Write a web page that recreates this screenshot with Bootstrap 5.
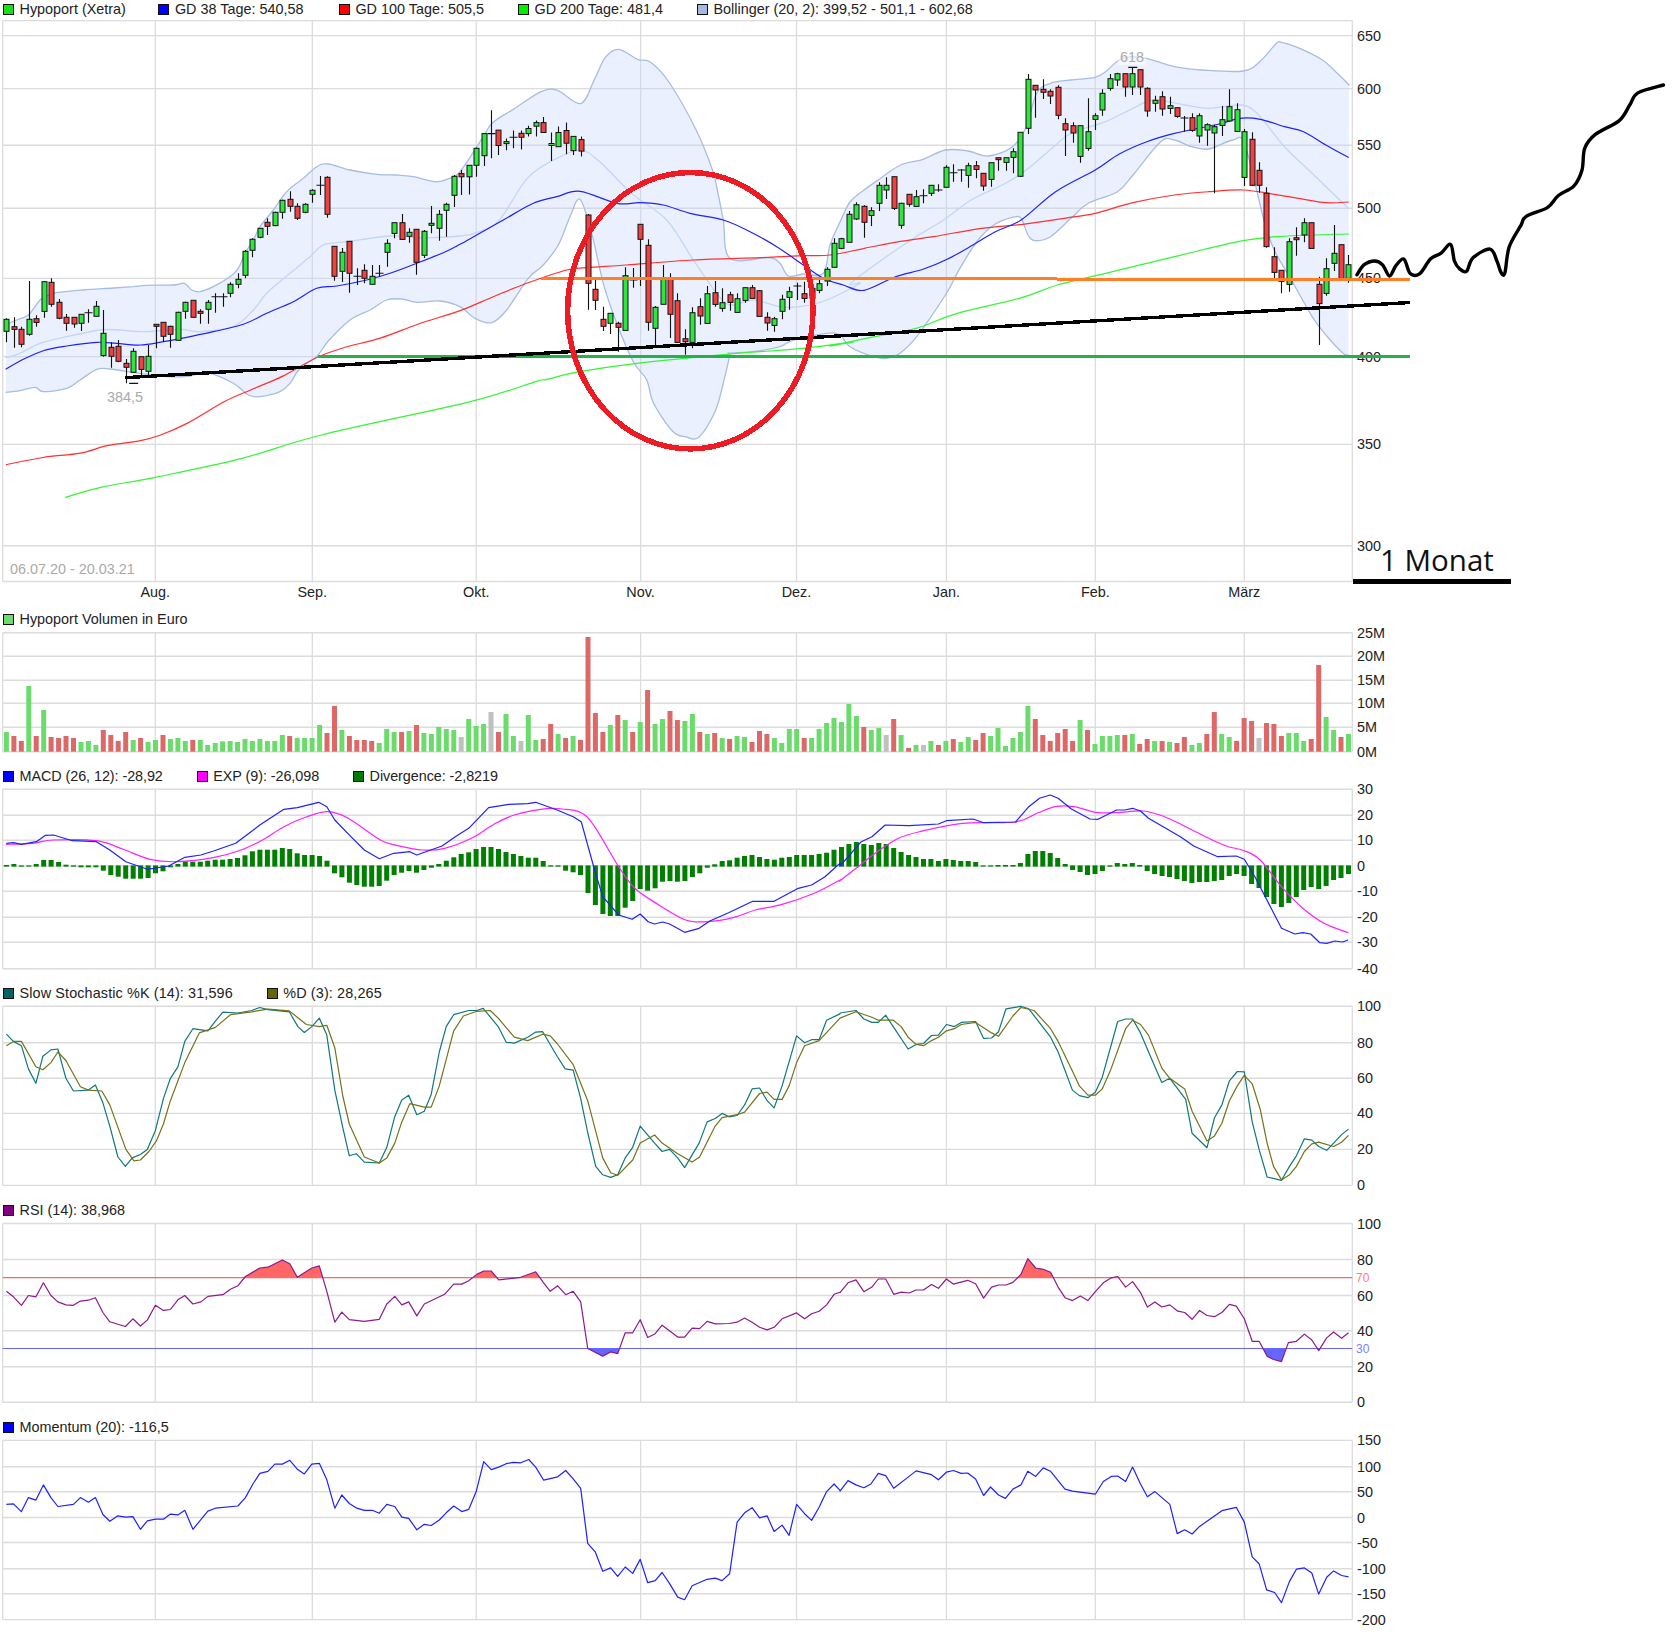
<!DOCTYPE html>
<html lang="de">
<head>
<meta charset="utf-8">
<title>Hypoport Chart</title>
<link href="https://cdn.jsdelivr.net/npm/bootstrap@5.3.0/dist/css/bootstrap.min.css" rel="stylesheet">
<style>
html,body{background:#fff;margin:0;overflow:hidden}
body{font-family:"Liberation Sans",Arial,sans-serif;color:#222;width:1674px;height:1644px}
.legend-row{padding-left:3px;gap:34px;font-size:14.4px;line-height:1;white-space:nowrap;color:#222}
.legend-first{height:18px}
.legend-vol{height:18px}
.legend-next{height:20px}
.legend-item{gap:5.5px}
.legend-tight{letter-spacing:-.07px}
.legend-wide{letter-spacing:.12px}
.item-narrow{margin-right:-1.5px}
.item-loose{margin-right:1.5px}
.swatch{display:block;width:11px;height:11px;border:1px solid #111}
.sw-lime{background:#16e016}.sw-blue{background:#0000ff}.sw-red{background:#ff0000}.sw-green{background:#00f000}
.sw-boll{background:#a3b8e3}.sw-vol{background:#6bdc6b}.sw-pink{background:#ff00ff}.sw-div{background:#007a00}
.sw-teal{background:#006464}.sw-olive{background:#666600}.sw-purple{background:#800080}
svg.plot{display:block;width:1674px;overflow:visible}
svg.plot text{font-family:"Liberation Sans",Arial,sans-serif;font-size:14.4px;fill:#222}
svg.plot text.tiny{font-size:12px}
svg.plot text.tiny-red{fill:#ff8080}
svg.plot text.tiny-blue{fill:#8080ff}
svg.plot text.muted-grey{fill:#aaa}
svg.plot text.scribble-label{font-family:"Open Sans","Noto Sans",sans-serif;font-size:29.5px;fill:#111}
</style>
</head>
<body>
<main class="d-flex flex-column">
<section>
 <div class="d-flex align-items-center legend-row legend-first">
  <span class="d-flex align-items-center legend-item item-narrow"><i class="swatch sw-lime"></i>Hypoport (Xetra)</span>
  <span class="d-flex align-items-center legend-item item-loose"><i class="swatch sw-blue"></i>GD 38 Tage: 540,58</span>
  <span class="d-flex align-items-center legend-item"><i class="swatch sw-red"></i>GD 100 Tage: 505,5</span>
  <span class="d-flex align-items-center legend-item"><i class="swatch sw-green"></i>GD 200 Tage: 481,4</span>
  <span class="d-flex align-items-center legend-item"><i class="swatch sw-boll"></i>Bollinger (20, 2): 399,52 - 501,1 - 602,68</span>
 </div>
 <svg class="plot" id="p1" height="592" viewBox="0 18 1674 592"></svg>
</section>
<section>
 <div class="d-flex align-items-center legend-row legend-vol">
  <span class="d-flex align-items-center legend-item"><i class="swatch sw-vol"></i>Hypoport Volumen in Euro</span>
 </div>
 <svg class="plot" id="p2" height="138" viewBox="0 628 1674 138"></svg>
</section>
<section>
 <div class="d-flex align-items-center legend-row legend-next legend-tight">
  <span class="d-flex align-items-center legend-item"><i class="swatch sw-blue"></i>MACD (26, 12): -28,92</span>
  <span class="d-flex align-items-center legend-item"><i class="swatch sw-pink"></i>EXP (9): -26,098</span>
  <span class="d-flex align-items-center legend-item"><i class="swatch sw-div"></i>Divergence: -2,8219</span>
 </div>
 <svg class="plot" id="p3" height="197" viewBox="0 786 1674 197"></svg>
</section>
<section>
 <div class="d-flex align-items-center legend-row legend-next legend-wide">
  <span class="d-flex align-items-center legend-item"><i class="swatch sw-teal"></i>Slow Stochastic %K (14): 31,596</span>
  <span class="d-flex align-items-center legend-item"><i class="swatch sw-olive"></i>%D (3): 28,265</span>
 </div>
 <svg class="plot" id="p4" height="197" viewBox="0 1003 1674 197"></svg>
</section>
<section>
 <div class="d-flex align-items-center legend-row legend-next">
  <span class="d-flex align-items-center legend-item"><i class="swatch sw-purple"></i>RSI (14): 38,968</span>
 </div>
 <svg class="plot" id="p5" height="197" viewBox="0 1220 1674 197"></svg>
</section>
<section>
 <div class="d-flex align-items-center legend-row legend-next">
  <span class="d-flex align-items-center legend-item"><i class="swatch sw-blue"></i>Momentum (20): -116,5</span>
 </div>
 <svg class="plot" id="p6" height="203" viewBox="0 1437 1674 203"></svg>
</section>
</main>
<script src="https://cdn.jsdelivr.net/npm/bootstrap@5.3.0/dist/js/bootstrap.bundle.min.js"></script>
<script>
const Z={
 1:(x,y)=>[x/1.8667,y/2.529],2:(x,y)=>[840+x/1.88,y/2.529],
 3:(x,y)=>[x/1.8667,610+y/3],4:(x,y)=>[840+x/1.88,610+y/3],
 5:(x,y)=>[x/1.8667,980+y/2.361],6:(x,y)=>[840+x/1.88,980+y/2.361],
 7:(x,y)=>[x/3,130+y/3],8:(x,y)=>[460+x/3,190+y/3],9:(x,y)=>[830+x/2.904,50+y/3],
 0:(x,y)=>[x,y]};
function pts(...segs){let o=[];for(const [z,a] of segs){for(let i=0;i<a.length;i+=2)o.push(Z[z](a[i],a[i+1]));}return o;}
const S=p=>p.map(q=>q[0].toFixed(1)+','+q[1].toFixed(1)).join(' ');
const line=(p,c,w=1.2)=>`<polyline points="${S(p)}" fill="none" stroke="${c}" stroke-width="${w}" stroke-linejoin="round"/>`;
/* Catmull-Rom curve through the points, for the moving averages */
function curveD(p,lead='M'){
 const f=n=>n.toFixed(1);
 let d=`${lead}${f(p[0][0])} ${f(p[0][1])}`;
 for(let i=0;i<p.length-1;i++){
  const a=p[Math.max(i-1,0)],b=p[i],c=p[i+1],e=p[Math.min(i+2,p.length-1)];
  d+=`C${f(b[0]+(c[0]-a[0])/6)} ${f(b[1]+(c[1]-a[1])/6)} ${f(c[0]-(e[0]-b[0])/6)} ${f(c[1]-(e[1]-b[1])/6)} ${f(c[0])} ${f(c[1])}`;
 }
 return d;
}
const curve=(p,c,w=1.2)=>`<path d="${curveD(p)}" fill="none" stroke="${c}" stroke-width="${w}" stroke-linejoin="round" stroke-linecap="round"/>`;
const VX=[155.3,312.3,476.2,640.6,796.5,946.4,1095.3,1244.3];
const L=2.7,R=1352.3,GC='#dcdcdc';
function grid(top,bot,ys){
 let s='';
 for(const y of ys)s+=`<line x1="${L}" x2="${R}" y1="${y}" y2="${y}" stroke="${GC}" stroke-width="1.4"/>`;
 for(const x of [L,...VX,R])s+=`<line x1="${x}" x2="${x}" y1="${top}" y2="${bot}" stroke="${GC}" stroke-width="1.3"/>`;
 return s;
}
function labels(ys,ls){let s='';ys.forEach((y,i)=>{s+=`<text x="1357" y="${y}" dominant-baseline="central">${ls[i]}</text>`});return s;}
const cx=i=>6.4+7.456*i;

/* ---------- Panel 1 ---------- */
const up=pts([7,[18,583,50,570,85,555,120,510,140,498,170,488,250,480,340,474,400,470,440,466,520,465,553,460,575,480,600,485,640,470,690,440,715,415,735,370,760,330,780,290,820,240,860,185,910,145,950,110,985,102,1050,120,1130,133,1190,135,1240,140,1305,155,1340,148,1380,125]],
 [1,[900,350,920,310,960,275,1010,232,1040,228,1084,262,1110,200,1130,145,1155,125,1190,150,1215,158,1250,210,1300,330,1330,430]],
 [8,[772,0,790,90,810,205,925,203,960,220,985,258,1030,252,1090,250]],
 [0,[830,245,840,222,850,202,864,190,881,178]],
 [9,[205,345,270,328,335,300,400,303,460,318,530,290,570,230,600,130,640,100,700,90,770,82,800,65,840,30,880,20,920,25,1000,50,1080,60,1200,63]],
 [2,[790,155,820,110,830,107,860,120,905,150,935,185,957,215]]);
const lo=pts([7,[18,787,60,782,105,772,130,785,200,775,240,750,290,718,330,717,420,730,500,740,570,738,620,728,700,760,745,795,780,800,840,785,870,760,900,715,950,680,985,633,1050,570,1110,540,1160,510,1205,507,1250,517,1320,513,1380,530]],
 [8,[45,385,95,398,140,360,205,265,250,225,295,165,330,80,360,28,395,130,430,280,470,400,520,515,560,570]],
 [1,[1220,1020,1255,1090,1280,1105,1305,1105,1335,1040,1350,970,1362,900]],
 [8,[808,490,880,485,960,470,1000,450,1100,430,1140,435,1170,470,1240,500,1280,505,1320,490,1370,440]],
 [9,[335,735,380,650,430,570,480,522,530,502,555,505,575,555,597,572,640,560,700,505,750,460,835,425,880,375,960,275,1000,270,1050,290,1100,297,1170,270,1205,285,1260,510,1290,600,1340,690,1400,800,1440,855,1490,910,1505,915]]);
const mid=pts([7,[18,683,60,670,120,640,200,620,300,600,360,600,430,605,540,598,600,605,700,590,760,540,800,490,870,430,930,380,970,345,1040,335,1170,318,1250,323,1300,323,1380,318]],
 [1,[885,590,930,560,985,450,1040,400,1085,380,1120,410,1180,490]],
 [8,[620,90,700,210,770,310,810,345,880,330,960,350,1020,350,1100,330,1200,280]],
 [9,[60,700,150,630,250,560,330,510,410,450,510,400,570,360,650,290,700,250,800,215,880,175,940,150,1030,165,1100,175,1190,165,1240,190,1320,290,1400,370,1505,475]]);
const sma38=pts([7,[18,717,70,688,130,662,200,648,290,637,350,640,420,645,490,635,560,622,640,605,730,583,800,550,880,515,950,475,1010,468,1100,450,1170,430,1250,400,1330,368,1380,343]],
 [8,[50,135,130,90,220,40,290,20,360,4,470,40,540,38,610,45,690,70,790,90,870,125,950,170,1030,225,1090,265,1150,285,1212,301]],
 [9,[190,680,270,658,340,628,415,585,480,545,555,510,655,425,770,360,840,312,920,275,1000,250,1130,222,1190,205,1250,208,1320,230,1375,245,1440,285,1505,322]]);
const sma100=pts([1,[12,1175,80,1157,150,1146,200,1127,260,1115,300,1100,350,1070,420,1015,470,985,530,950,590,905,640,880,710,855,780,820,860,785]],
 [8,[100,320,200,280,320,240,380,233,500,225,700,210,900,203,1030,197]],
 [9,[0,615,100,595,200,575,300,560,440,535,560,523,680,505,770,490,880,458,1000,435,1100,425,1200,420,1290,433,1360,445,1440,458,1505,456]]);
const sma200=pts([1,[122,1258,190,1232,290,1207,450,1160,600,1100,880,1015,1000,965]],
 [8,[260,568,360,545,530,520,800,493,1030,475,1180,455]],
 [9,[0,888,130,860,250,835,370,790,550,745,660,705,800,670,1000,620,1200,572,1330,558,1505,552]]);

const cand=[];
const add=(z,arr)=>{for(const c of arr){const f=v=>Z[z](0,v)[1];cand.push([f(c[0]),f(c[1]),f(c[2]),f(c[3]),c[4]]);}};
add(7,[[568,604,565,637,'g'],[590,598,562,653,'r'],[598,643,590,652,'r'],[568,613,453,617,'g'],[566,577,556,590,'r'],[455,544,455,563,'g'],[457,523,445,530,'r'],[517,565,507,568,'r'],[562,580,552,602,'r'],[562,582,562,593,'r'],[553,580,553,603,'g'],[548,548,538,578,'d'],[529,559,513,559,'g'],[610,677,540,680,'g'],[652,679,637,713,'r'],[649,694,630,697,'r'],[700,712,687,760,'r'],[664,727,655,727,'g'],[680,718,680,735,'r'],[679,724,645,735,'g'],[583,589,583,655,'r'],[577,619,577,636,'r'],[589,613,587,653,'r'],[547,631,545,631,'g'],[517,544,515,566,'g'],[511,562,511,562,'r'],[544,550,538,581,'r'],[517,538,510,581,'g'],[500,500,490,548,'d'],[500,500,490,530,'d'],[463,490,457,502,'g'],[448,463,430,475,'g'],[364,436,360,445,'g'],[328,361,325,382,'g'],[295,322,295,325,'g'],[277,289,265,315,'r'],[247,287,245,289,'g'],[211,247,209,266,'g'],[208,229,184,245,'r'],[229,265,220,270,'r'],[223,247,220,250,'g'],[181,193,178,218,'g'],[166,166,138,195,'d'],[142,253,139,263,'r'],[349,439,349,452,'r'],[367,424,354,456,'g'],[334,430,334,488,'r'],[439,439,415,465,'d'],[421,445,403,460,'r'],[439,463,405,463,'g'],[430,430,405,440,'d'],[340,367,328,410,'g'],[278,310,278,325,'g'],[278,328,252,330,'r'],[307,319,295,338,'g'],[298,397,298,434,'r'],[304,376,300,384,'g'],[280,286,228,310,'g'],[253,295,240,332,'g'],[223,241,218,320,'g'],[139,196,135,231,'g']]);
add(1,[[439,447,430,493,'r'],[418,447,418,492,'g'],[375,418,373,447,'g'],[338,394,338,420,'g'],[338,338,279,400,'d'],[329,368,329,392,'r'],[358,363,350,380,'g'],[347,347,330,375,'d'],[337,347,330,378,'r'],[325,338,318,345,'g'],[310,319,305,345,'g'],[310,335,296,335,'r'],[363,368,335,407,'g'],[335,371,320,371,'g'],[330,362,310,390,'r'],[345,381,345,392,'g'],[353,382,345,396,'r']]);
add(8,[[75,280,72,359,'r'],[298,331,270,360,'r'],[388,409,350,423,'r'],[370,400,370,432,'g'],[400,412,395,485,'r'],[257,421,232,421,'g'],[270,270,234,293,'d'],[103,148,103,288,'r'],[166,397,148,422,'r'],[352,415,348,465,'g'],[265,343,225,343,'g'],[265,373,250,444,'r'],[332,457,310,458,'r'],[446,455,418,494,'r'],[368,457,352,475,'g'],[350,378,325,404,'r'],[311,400,288,400,'g'],[308,343,273,350,'r'],[338,355,295,365,'g'],[314,337,305,362,'r'],[326,367,310,367,'g'],[293,331,292,338,'g'],[293,325,285,325,'r'],[302,379,300,379,'r'],[382,399,367,422,'r'],[386,406,380,425,'g'],[328,364,314,388,'g'],[305,322,290,359,'g'],[288,288,278,330,'d'],[311,325,275,338,'r'],[295,325,293,345,'r'],[281,301,265,310,'g'],[238,273,232,288,'g'],[160,232,145,232,'g'],[146,175,143,178,'g'],[73,157,63,157,'g'],[44,87,37,90,'g'],[49,97,46,143,'r'],[62,76,52,108,'g']]);
add(9,[[406,460,397,483,'g'],[406,420,382,447,'g'],[380,475,380,480,'r'],[460,526,458,536,'g'],[433,463,433,470,'r'],[440,469,420,470,'g'],[437,437,418,460,'d'],[406,430,406,438,'g'],[420,420,403,425,'d'],[352,412,346,412,'g'],[368,368,343,395,'d'],[360,360,357,395,'d'],[347,376,338,413,'g'],[347,358,333,385,'r'],[370,408,370,422,'r'],[338,388,338,410,'g'],[323,328,323,362,'r'],[323,337,323,362,'g'],[305,322,295,370,'g'],[247,379,247,380,'g'],[88,235,72,252,'g'],[106,120,105,203,'r'],[118,127,88,147,'r'],[124,138,118,162,'r'],[112,196,106,208,'r'],[221,240,205,318,'r'],[227,249,217,278,'r'],[227,319,227,338,'g'],[245,295,145,302,'g'],[197,208,190,240,'g'],[130,180,118,197,'g'],[86,115,72,122,'g'],[71,90,68,108,'g'],[71,111,71,140,'r'],[71,111,52,135,'g'],[59,111,59,135,'r'],[115,183,112,200,'r'],[151,160,137,185,'g'],[140,177,124,197,'r'],[167,175,140,192,'g'],[173,199,173,203,'r'],[204,204,198,245,'d'],[203,241,190,245,'r'],[197,258,190,278,'g'],[224,240,220,287,'g'],[230,249,224,430,'g'],[209,226,168,258,'g'],[170,213,118,215,'g'],[179,244,160,245,'g'],[245,382,237,408,'g'],[268,406,247,408,'r'],[361,406,337,428,'r'],[430,590,412,593,'r'],[620,667,592,690,'r'],[661,694,661,730,'r'],[575,703,565,725,'g'],[563,568,532,617,'r'],[518,555,505,577,'g'],[518,595,518,595,'r'],[703,761,680,885,'r'],[656,730,625,737,'g'],[610,640,525,663,'g'],[584,690,584,690,'r'],[644,685,615,698,'g']]);

function candles(){
 let w='',b='';
 cand.forEach((c,i)=>{
  const x=Math.round(cx(i))+.5;const [t,bb,h,l,k]=c;
  w+=`M${x} ${h.toFixed(1)}V${l.toFixed(1)}`;
  if(k==='d'){w+=`M${x-4} ${t.toFixed(1)}H${x+4}`;return;}
  const col=k==='g'?'#2fe63c':'#f24040';
  b+=`<rect x="${x-2.5}" y="${t.toFixed(1)}" width="5" height="${Math.max(bb-t,2).toFixed(1)}" fill="${col}" stroke="#111" stroke-width="1"/>`;
 });
 const lo1=Z[7](0,760)[1],hi1=Z[9](0,52)[1];
 w+=`M${cx(17)-4} ${lo1}H${cx(17)+5}M${cx(151)-4} ${hi1}H${cx(151)+5}`;
 return `<path d="${w}" stroke="#111" stroke-width="1.1" fill="none"/>`+b;
}
const ysP1=[35.6,88.6,145.3,208.3,278.4,356.6,444.4,545.7];
const scribble=pts([2,[972,695,985,670,1005,660,1020,670,1033,698,1045,672,1060,655,1072,692,1090,692,1110,655,1130,640,1148,618,1155,660,1165,680,1178,686,1190,652,1222,630,1235,660,1243,690,1250,690,1258,625,1280,570,1290,547,1330,525,1350,495,1380,470,1395,430,1400,375,1420,340,1465,305,1485,265,1500,235,1548,215]]);
document.getElementById('p1').innerHTML=
 grid(20.6,581.5,[20.6,...ysP1,581.5])
 +`<path d="${curveD(up)}${curveD(lo.slice().reverse(),'L')}Z" fill="#c4d6fa" fill-opacity=".36"/>`
 +curve(up,'#a8bde2',1.3)+curve(lo,'#a8bde2',1.3)+curve(mid,'#c3d6f6',1.3)
 +curve(sma100,'#ff3030')+curve(sma200,'#35f535')+curve(sma38,'#2020ff')
 +candles()
 +labels(ysP1,['650','600','550','500','450','400','350','300'])
 +['Aug.','Sep.','Okt.','Nov.','Dez.','Jan.','Feb.','März'].map((t,i)=>`<text x="${VX[i]}" y="592" text-anchor="middle" dominant-baseline="central">${t}</text>`).join('')
 +`<text class="muted-grey" x="125" y="397" text-anchor="middle" dominant-baseline="central">384,5</text>`
 +`<rect x="1118" y="49" width="28" height="16" fill="#fff" fill-opacity=".55"/>`
 +`<text class="muted-grey" x="1132" y="57" text-anchor="middle" dominant-baseline="central">618</text>`
 +`<text class="muted-grey" x="10" y="569" dominant-baseline="central">06.07.20 - 20.03.21</text>`
 +`<g shape-rendering="crispEdges">`
 +`<line x1="318" x2="1410" y1="356.5" y2="356.5" stroke="#22b14c" stroke-width="3"/>`
 +`<line x1="541" x2="1057" y1="278.4" y2="278.4" stroke="#ff7f27" stroke-width="3"/>`
 +`<line x1="1057" x2="1410" y1="279.6" y2="279.6" stroke="#ff7f27" stroke-width="3"/>`
 +`<line x1="125" x2="1410" y1="377.7" y2="302.5" stroke="#000" stroke-width="3.4"/>`
 +`<ellipse cx="690.3" cy="310.7" rx="122.7" ry="138.2" fill="none" stroke="#ed1c24" stroke-width="5.5"/>`
 +`<line x1="1353" x2="1511" y1="581.5" y2="581.5" stroke="#000" stroke-width="4.5"/>`
 +`</g>`
 +curve(scribble,'#000',3.4)
 +`<text class="scribble-label" x="1380" y="571">1 Monat</text>`;

/* ---------- Panel 2: Volumen ---------- */
const vol=('g366 r378 r393 g228 r378 g300 r381 r384 r378 r384 g396 g393 g405 r360 r375 r393 r366 g390 r384 g396 g390 r375 g387 g384 g393 r390 g390 g405 g399 g394 g393 g396 g387 g393 g387 g393 g393 g375 r378 g384 g384 g384 g345 r369 r288 g360 r378 r390 r390 r393 g399 g357 g366 r366 g363 r345 g369 g372 g351 g357 g360 x381 g327 g348 g342 x306 r366 g312 g378 x393 g315 g390 r387 r342 g372 r384 g378 r390 r81 r309 r366 g345 r315 g330 r366 g336 r240 g342 g327 r303 r330 g333 g312 r366 g372 r369 g384 r387 g378 g381 r396 r363 r372 g384 g399 g357 g357 r384 g384 g357 g339 g324 '
 +'g336 g282 g318 r351 g360 g354 x375 r327 g375 r414 g405 x405 g393 r405 g393 r387 g396 g381 r390 r369 g378 g354 g408 g384 g366 g288 r327 r375 r393 r369 r357 r393 g330 r360 g402 g378 g378 g375 r375 g372 r402 r387 g393 r393 g396 r399 r381 g405 g399 r372 r306 g372 g381 r393 r324 r333 x384 r339 r342 r378 g369 g369 g393 r387 r165 g321 g360 r381 g372').split(' ');
const VC={g:'#6bdc6b',r:'#dd6868',x:'#c0c0c0'};
const ysV=[632.7,656.3,680.3,703.3,727.3,751.7];
let vs='';vol.forEach((v,i)=>{const y=610+(+v.slice(1))/3;vs+=`<rect x="${(cx(i)-2.5).toFixed(1)}" y="${y.toFixed(1)}" width="5" height="${(751.7-y).toFixed(1)}" fill="${VC[v[0]]}"/>`});
document.getElementById('p2').innerHTML=grid(632.7,751.7,ysV)+vs+labels(ysV,['25M','20M','15M','10M','5M','0M']);

/* ---------- Panel 3: MACD ---------- */
const hist=[765,762,770,768,762,750,750,756,764,770,772,772,772,782,795,800,806,806,806,804,790,784,772,762,755,755,755,752,749,749,747,744,736,724,719,719,719,714,717,730,735,735,738,752,790,802,818,825,830,830,828,812,795,788,783,788,780,773,762,752,742,732,727,717,711,711,717,726,732,738,743,743,753,766,770,782,787,795,849,885,912,918,918,893,873,837,842,835,815,813,815,813,801,790,773,763,753,751,743,738,735,741,747,749,743,741,735,735,735,732,728,719,
711,702,696,702,705,699,702,714,726,735,741,747,747,753,747,750,753,753,756,768,768,765,765,765,759,732,723,723,729,744,762,780,786,795,792,783,770,759,762,759,765,783,792,798,801,807,813,819,816,816,813,810,798,792,798,822,834,861,882,891,879,861,840,831,837,828,810,804,792];
let hs='';hist.forEach((v,i)=>{const y=610+v/3,z=866,t=Math.min(y,z-.6),b=Math.max(y,z+.6);hs+=`<rect x="${(cx(i)-2.5).toFixed(1)}" y="${t.toFixed(1)}" width="5" height="${(b-t).toFixed(1)}" fill="#007f00"/>`});
const macd=pts([3,[12,700,25,698,40,703,68,695,85,676,100,675,135,692,180,695,205,720,235,755,275,778,315,768,345,742,375,735,400,722,440,700,485,645,530,598,555,593,595,577,610,590,625,630,655,680,680,720,708,746,735,730,765,725,778,735,825,708,850,680,875,655,912,593,950,583,985,581,1000,577,1040,600,1070,620,1085,635,1110,780,1125,860,1155,915,1180,928,1195,912,1210,935,1222,942,1237,936,1250,942,1278,967,1305,955,1325,933,1360,908,1405,874,1445,874,1490,835,1515,825,1540,800,1568,760]],
 [4,[0,768,40,695,60,680,85,645,130,647,185,642,200,632,250,627,270,638,330,636,355,590,375,565,395,555,410,565,435,597,470,627,485,628,520,600,535,600,550,595,565,603,580,625,640,680,665,708,710,740,745,738,760,748,780,800,830,955,855,972,870,968,885,972,902,998,915,1000,930,993,945,996,955,990]]);
const exp9=pts([3,[12,703,60,700,100,690,180,692,230,718,280,748,330,755,400,742,450,720,490,690,530,650,570,622,612,605,650,625,710,690,740,706,790,720,830,715,880,685,920,645,960,615,1020,596,1050,597,1085,608,1110,650,1155,770,1185,835,1230,885,1280,930,1320,935,1370,922,1410,900,1460,883,1520,850,1568,810]],
 [4,[0,812,30,775,70,725,110,685,150,665,230,640,330,636,370,610,405,590,440,590,480,607,520,608,570,603,610,620,650,650,700,690,730,710,760,722,790,750,830,830,870,895,910,940,955,968]]);
const ysM=[789.3,815.3,840.3,866,891.3,917.3,942.3,968.7];
document.getElementById('p3').innerHTML=grid(789.3,968.7,ysM)+hs+curve(exp9,'#ff20ff')+line(macd,'#2020ff')+labels(ysM,['30','20','10','0','-10','-20','-30','-40']);

/* ---------- Panel 4: Stochastik ---------- */
const ysS=[1006.3,1042.7,1078.3,1113.4,1149.4,1185.4];
const stK=pts([5,[12,128,25,145,40,155,53,210,67,244,80,180,95,165,108,163,123,232,137,262,165,260,178,248,192,290,205,345,220,418,234,440,247,420,262,412,275,400,290,355,305,280,318,232,332,205,345,145,360,115,388,120,402,97,416,76,444,78,470,72,485,65,500,70,540,75,556,110,568,124,582,110,596,90,610,130,625,260,640,350,652,415,665,410,680,430,708,432,722,395,737,322,750,283,763,272,778,318,792,310,805,270,820,170,833,110,847,82,875,72,890,72,902,67,930,110,945,147,960,149,985,135,1000,123,1013,122,1040,180,1055,210,1070,213,1084,280,1097,360,1112,440,1125,460,1140,466,1153,460,1167,420,1181,395,1195,345,1222,385,1236,405,1250,400,1265,420,1278,443,1305,385,1320,335,1335,327,1348,315,1361,323,1376,320,1390,295,1404,257,1418,255,1432,285,1445,302,1460,250,1487,132,1502,148,1515,141,1529,141,1543,95,1568,80]],
 [6,[0,78,30,72,45,92,60,100,72,100,86,83,100,110,128,163,143,152,157,150,172,131,185,130,200,105,215,110,228,100,255,98,270,138,285,137,298,122,312,68,340,62,355,68,396,135,410,170,437,260,450,273,466,278,480,265,493,230,522,98,537,92,550,92,565,125,592,205,605,242,620,232,650,282,662,362,690,396,704,325,718,295,732,238,747,216,760,217,775,335,788,400,803,465,830,473,845,440,858,415,873,375,887,378,900,393,915,402,928,385,943,365,956,352]]);
const stD=pts([5,[12,155,25,145,40,145,67,205,80,212,95,195,108,170,123,190,150,252,165,260,190,262,205,295,235,400,250,427,262,425,278,405,292,380,305,340,318,285,345,195,372,125,402,112,430,82,470,75,500,69,540,73,572,105,596,110,610,107,625,160,640,275,652,340,680,418,708,432,722,420,737,385,750,335,765,292,792,300,805,300,820,250,847,120,865,85,890,74,915,72,930,90,960,135,985,143,1013,128,1027,132,1040,150,1070,200,1097,285,1125,420,1140,455,1153,461,1181,425,1195,385,1222,366,1236,385,1265,410,1292,430,1306,418,1335,345,1348,325,1376,318,1390,312,1418,268,1432,265,1445,282,1460,282,1473,250,1487,195,1502,155,1529,143,1568,90]],
 [6,[0,90,30,75,60,88,72,95,100,95,115,110,128,135,143,152,157,155,172,143,185,135,200,120,215,115,228,105,255,100,285,125,298,133,325,85,340,65,365,72,396,115,410,145,437,215,450,250,466,272,480,272,493,257,508,215,537,115,550,95,565,105,580,130,605,208,620,232,648,257,662,310,690,380,704,368,718,338,732,285,747,250,760,225,775,245,790,305,803,385,815,440,830,472,845,460,858,440,873,405,887,387,900,383,928,393,943,383,956,367]]);
document.getElementById('p4').innerHTML=grid(1006.3,1185.4,ysS)+line(stK,'#107878')+line(stD,'#73731a')+labels(ysS,['100','80','60','40','20','0']);

/* ---------- Panel 5: RSI ---------- */
const ysR=[1223.5,1259.5,1295.5,1330.7,1366.7,1402.3];
const rsi=pts([5,[12,735,25,748,40,768,53,745,67,748,81,715,95,745,108,760,123,767,137,768,150,758,165,756,178,750,192,785,205,807,220,813,234,818,248,800,262,817,275,803,290,768,305,780,318,778,332,755,345,745,360,765,375,760,388,747,416,743,430,730,444,722,458,700,485,680,500,678,527,661,541,670,555,702,582,680,596,675,610,735,625,808,638,784,652,802,680,806,708,801,722,765,737,747,750,767,763,760,778,793,792,765,830,742,847,718,862,718,875,710,890,695,903,687,917,687,931,708,972,702,1000,689,1013,712,1027,735,1041,722,1056,743,1070,735,1084,760,1097,870,1125,888,1140,878,1153,882,1167,833,1181,833,1195,802,1209,844,1223,835,1236,815,1265,843,1278,843,1292,822,1306,823,1320,806,1335,812,1361,811,1376,808,1390,798,1404,808,1418,820,1432,826,1445,820,1460,800,1487,786,1502,800,1515,788,1529,782,1543,767,1557,742,1568,737]],
 [6,[0,738,15,715,30,708,45,736,60,725,72,706,86,706,101,742,115,737,130,739,143,732,157,732,172,719,185,728,200,706,213,718,240,709,255,717,270,751,285,725,298,720,312,720,325,714,340,695,353,658,368,680,382,683,396,690,410,725,423,750,437,757,452,746,466,757,480,736,495,715,510,703,522,700,537,725,550,712,565,738,578,772,592,760,605,772,620,767,635,782,648,785,662,801,676,780,690,792,704,795,718,785,732,766,745,770,760,800,775,853,788,853,803,888,815,896,830,901,843,856,858,853,873,836,887,850,900,875,915,845,928,831,943,846,956,833]]);
const y70=1277.7,y30=1348.5,x0=rsi[0][0],x1=rsi[rsi.length-1][0];
document.getElementById('p5').innerHTML=
 `<defs><clipPath id="over70"><rect x="0" y="1220" width="1400" height="${y70-1220}"/></clipPath><clipPath id="under30"><rect x="0" y="${y30}" width="1400" height="60"/></clipPath></defs>`
 +grid(1223.5,1402.3,ysR)
 +`<polygon clip-path="url(#over70)" points="${x0},${y70} ${S(rsi)} ${x1},${y70}" fill="#ff6666"/>`
 +`<polygon clip-path="url(#under30)" points="${x0},${y30} ${S(rsi)} ${x1},${y30}" fill="#6666ff"/>`
 +`<line x1="${L}" x2="${R}" y1="${y70}" y2="${y70}" stroke="#ff6666" stroke-width="1.2"/>`
 +`<line x1="${L}" x2="${R}" y1="${y30}" y2="${y30}" stroke="#6666ff" stroke-width="1.1"/>`
 +line(rsi,'#8b1a8b')
 +labels(ysR,['100','80','60','40','20','0'])
 +`<text class="tiny tiny-red" x="1356" y="${y70}" dominant-baseline="central">70</text>`
 +`<text class="tiny tiny-blue" x="1356" y="${y30}" dominant-baseline="central">30</text>`;

/* ---------- Panel 6: Momentum ---------- */
const ysO=[1440.4,1466.7,1491.7,1517.5,1542.5,1568.7,1593.7,1619.6];
const mom=pts([5,[12,1238,25,1237,40,1255,53,1222,67,1228,81,1192,95,1222,108,1243,137,1238,150,1222,165,1233,178,1222,192,1262,205,1278,220,1265,234,1268,248,1267,262,1297,275,1277,290,1273,305,1273,318,1261,332,1263,345,1252,360,1297,388,1254,402,1247,444,1242,458,1222,472,1190,485,1165,500,1160,513,1143,527,1143,541,1134,555,1155,568,1166,582,1143,596,1141,610,1180,625,1247,638,1216,652,1236,666,1247,680,1252,695,1252,708,1259,722,1238,737,1243,750,1268,763,1271,778,1298,792,1285,805,1288,820,1275,833,1258,847,1242,862,1255,875,1250,889,1208,903,1137,917,1156,931,1150,945,1142,958,1139,972,1140,987,1132,1000,1150,1015,1181,1041,1173,1056,1158,1070,1178,1084,1200,1097,1330,1111,1350,1125,1396,1140,1388,1153,1408,1167,1386,1181,1401,1195,1368,1209,1423,1223,1418,1236,1399,1250,1425,1265,1457,1278,1463,1292,1430,1320,1415,1335,1412,1348,1418,1362,1402,1376,1280,1390,1258,1404,1246,1418,1270,1432,1265,1445,1302,1460,1287,1473,1311,1487,1238,1502,1260,1515,1276,1529,1245,1543,1208,1557,1190,1568,1205]],
 [6,[0,1207,15,1182,30,1192,45,1199,58,1190,72,1165,86,1170,101,1200,130,1172,143,1159,172,1168,185,1180,200,1162,213,1158,228,1165,240,1164,255,1178,270,1217,283,1197,298,1216,311,1224,325,1202,340,1192,353,1160,368,1172,382,1152,396,1160,410,1182,423,1202,437,1207,480,1214,495,1184,510,1172,522,1171,537,1184,550,1150,565,1190,578,1220,592,1208,620,1238,634,1307,648,1298,662,1308,676,1290,690,1278,718,1253,745,1245,760,1280,775,1362,788,1378,802,1440,817,1446,830,1470,845,1420,858,1391,873,1388,887,1400,900,1450,915,1410,928,1395,943,1406,956,1409]]);
document.getElementById('p6').innerHTML=grid(1440.4,1619.6,ysO)+line(mom,'#2020ff')+labels(ysO,['150','100','50','0','-50','-100','-150','-200']);
</script>
</body>
</html>
